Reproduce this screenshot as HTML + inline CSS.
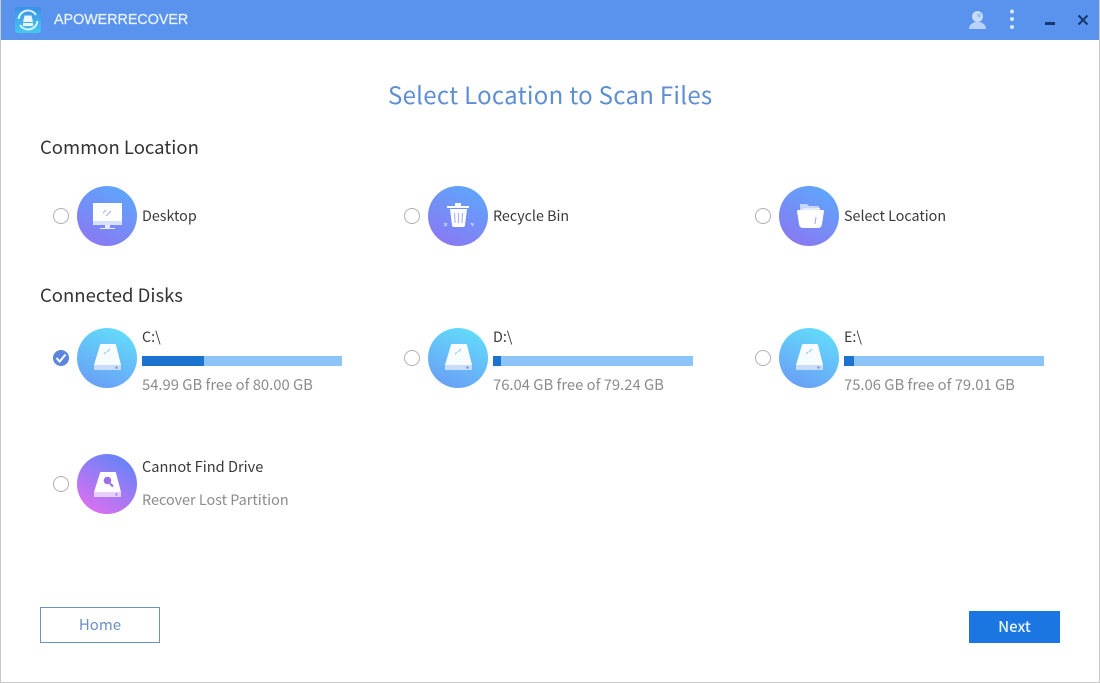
<!DOCTYPE html>
<html><head><meta charset="utf-8"><style>
html,body{margin:0;padding:0;background:#fff}
#p{position:relative;width:1100px;height:683px;overflow:hidden;background:#fff;font-family:"Noto Sans CJK SC","Liberation Sans",sans-serif}
#p:after{content:"";position:absolute;left:0;top:0;right:0;bottom:0;border:1px solid #c9c9c9;border-top:0;pointer-events:none}
.t{position:absolute;white-space:nowrap;line-height:20px}
.n{font-size:14.3px;color:#3a3a3a}
.g{font-size:14.8px;color:#8c8c8c}
.h{font-size:18.5px;color:#333;line-height:24px}
.r{position:absolute;width:14px;height:14px;border:1px solid #b0b0b0;border-radius:50%;background:#fff}
.c{position:absolute;width:60px;height:60px;top:0}
.b{position:absolute;height:10px;width:200px;background:#8cc4f8}
.b i{display:block;height:10px;background:#1b73cf}
svg{position:absolute;display:block}
</style></head><body><div id="p">
<div style="position:absolute;left:0;top:0;width:1100px;height:40px;background:#5a93ee"></div>
<svg style="left:14px;top:6px" width="28" height="28" viewBox="0 0 28 28"><defs><linearGradient id="lg" x1="0" y1="0" x2="0" y2="1"><stop offset="0" stop-color="#3b8fe8"/><stop offset="1" stop-color="#45c8ee"/></linearGradient></defs><rect x="1" y="1" width="26" height="26" rx="3" fill="url(#lg)"/><path d="M4.500 13A9.500 9.500 0 0 1 22 9M23.500 15A9.500 9.500 0 0 1 6 19" fill="none" stroke="#d8f2ff" stroke-width="2"/><path d="M10.500 9.500h7l1.500 6.500h-10zM9 17h10v3H9z" fill="#eaf6ff"/></svg>
<div class="t" style="left:54px;top:10px;font-size:14.3px;color:#eaf3ff;font-family:'Liberation Sans',sans-serif;-webkit-text-stroke:.25px #eaf3ff">APOWERRECOVER</div>
<svg style="left:966px;top:9px" width="22" height="22" viewBox="0 0 22 22"><circle cx="11.500" cy="7.500" r="5.500" fill="#c8dcf8"/><circle cx="13" cy="6.500" r="2" fill="#5a93ee" opacity=".4"/><path d="M3 20c0-4 3-6 6-7h5c3 1 6 3 6 7z" fill="#b9d2f7"/></svg>
<svg style="left:1008px;top:8px" width="8" height="24" viewBox="0 0 8 24"><circle cx="4" cy="3.500" r="2" fill="#d3ecff"/><circle cx="4" cy="11" r="2" fill="#d3ecff"/><circle cx="4" cy="19" r="2" fill="#d3ecff"/></svg>
<div style="position:absolute;left:1045px;top:22px;width:10px;height:3px;background:#16386f"></div>
<svg style="left:1077px;top:14px" width="12" height="12" viewBox="0 0 12 12"><path d="M1.500 1.500l9 9M10.500 1.500l-9 9" stroke="#16386f" stroke-width="2"/></svg>

<div class="t" style="left:388px;top:77px;font-size:24px;letter-spacing:.28px;line-height:34px;color:#5f8fd3">Select Location to Scan Files</div>
<div class="t h" style="left:40px;top:135px">Common Location</div>
<div class="t h" style="left:40px;top:283px">Connected Disks</div>

<svg width="0" height="0" style="left:0;top:0"><defs>
<linearGradient id="pu" x1=".75" y1="0" x2=".25" y2="1"><stop offset="0" stop-color="#5da7fb"/><stop offset="1" stop-color="#8a78f2"/></linearGradient>
<linearGradient id="bl" x1=".7" y1="0" x2=".3" y2="1"><stop offset="0" stop-color="#62dcfb"/><stop offset="1" stop-color="#6a9ff5"/></linearGradient>
<linearGradient id="ma" x1=".8" y1="0" x2=".2" y2="1"><stop offset="0" stop-color="#5f85f7"/><stop offset="1" stop-color="#e06ff0"/></linearGradient>
<g id="disk"><path d="M23 17q0-1 1-1h14q1 0 1 1l5 20H17z" fill="#fff" opacity=".95"/><path d="M27 26l2-2M30 24l3-3" stroke="#9dc0ee" stroke-width="1"/><path d="M17 37h27v5H17z" fill="#c8dcfa"/><rect x="38.500" y="38.500" width="2" height="2" fill="#6c8fd6"/></g>
</defs></svg>

<!-- Row 1 -->
<div class="r" style="left:53px;top:208px"></div>
<svg class="c" style="left:77px;top:186px" viewBox="0 0 60 60"><circle cx="30" cy="30" r="30" fill="url(#pu)"/><rect x="16" y="17" width="29" height="18" fill="#fff"/><path d="M16 35h29v4H16z" fill="#d6e2fb"/><path d="M28 42v-3h5v3z" fill="#e3ebfc"/><path d="M23 42.500h15" stroke="#e3ebfc" stroke-width="1"/><path d="M26 27l3-3M29 30l5-5" stroke="#9db4ee" stroke-width="1"/></svg>
<div class="t n" style="left:142px;top:206px">Desktop</div>

<div class="r" style="left:404px;top:208px"></div>
<svg class="c" style="left:428px;top:186px" viewBox="0 0 60 60"><circle cx="30" cy="30" r="30" fill="url(#pu)"/><path d="M19 21h22" stroke="#fff" stroke-width="2"/><rect x="27" y="17" width="6" height="3" fill="#fff"/><path d="M22 23h17l-2 16q0 2-2 2H26q-2 0-2-2z" fill="#fff"/><path d="M26.500 27l.5 10M30.500 27v10M34.500 27l-.5 10" stroke="#a9b8f2" stroke-width="1.200"/><path d="M16 37l3 3M19 37l-3 3M43 37l2 3M46 38h-3" stroke="#c3d1fa" stroke-width="1.200"/></svg>
<div class="t n" style="left:493px;top:206px">Recycle Bin</div>

<div class="r" style="left:755px;top:208px"></div>
<svg class="c" style="left:779px;top:186px" viewBox="0 0 60 60"><circle cx="30" cy="30" r="30" fill="url(#pu)"/><path d="M21 18h7l2 2h10v5H21z" fill="#c6d5fb"/><path d="M24 22h17v5H24z" fill="#e4ebfe"/><path d="M18 25q0-1 1-1h25q1 0 1 1l-2 13q-.5 4-4 4H24q-3.500 0-4-4z" fill="#fff"/><path d="M37 31l-1 7" stroke="#a9a4f0" stroke-width="1"/></svg>
<div class="t n" style="left:844px;top:206px">Select Location</div>

<!-- Row 2 -->
<svg style="left:53px;top:350px" width="16" height="16" viewBox="0 0 16 16"><circle cx="8" cy="8" r="8" fill="#5a86e0"/><path d="M3.500 8l3.200 3.500L12.500 4.500" fill="none" stroke="#fff" stroke-width="2"/></svg>
<svg class="c" style="left:77px;top:328px" viewBox="0 0 60 60"><circle cx="30" cy="30" r="30" fill="url(#bl)"/><use href="#disk"/></svg>
<div class="t n" style="left:142px;top:327px">C:\</div>
<div class="b" style="left:142px;top:356px"><i style="width:62px"></i></div>
<div class="t g" style="left:142px;top:375px">54.99 GB free of 80.00 GB</div>

<div class="r" style="left:404px;top:350px"></div>
<svg class="c" style="left:428px;top:328px" viewBox="0 0 60 60"><circle cx="30" cy="30" r="30" fill="url(#bl)"/><use href="#disk"/></svg>
<div class="t n" style="left:493px;top:327px">D:\</div>
<div class="b" style="left:493px;top:356px"><i style="width:8px"></i></div>
<div class="t g" style="left:493px;top:375px">76.04 GB free of 79.24 GB</div>

<div class="r" style="left:755px;top:350px"></div>
<svg class="c" style="left:779px;top:328px" viewBox="0 0 60 60"><circle cx="30" cy="30" r="30" fill="url(#bl)"/><use href="#disk"/></svg>
<div class="t n" style="left:844px;top:327px">E:\</div>
<div class="b" style="left:844px;top:356px"><i style="width:10px"></i></div>
<div class="t g" style="left:844px;top:375px">75.06 GB free of 79.01 GB</div>

<!-- Row 3 -->
<div class="r" style="left:53px;top:476px"></div>
<svg class="c" style="left:77px;top:454px" viewBox="0 0 60 60"><circle cx="30" cy="30" r="30" fill="url(#ma)"/><path d="M23 19q0-1 1-1h14q1 0 1 1l5 19H17z" fill="#fff"/><circle cx="30.500" cy="26.500" r="3.800" fill="#9a6fe8"/><path d="M33 29.500l3 3" stroke="#9a6fe8" stroke-width="2"/><path d="M17 38h27v5H17z" fill="#e9cffb"/><rect x="38.500" y="39.500" width="2" height="2" fill="#9a6fe8"/></svg>
<div class="t n" style="left:142px;top:457px;font-size:14.6px">Cannot Find Drive</div>
<div class="t g" style="left:142px;top:490px;font-size:14.4px">Recover Lost Partition</div>

<div style="position:absolute;left:40px;top:607px;width:118px;height:34px;border:1px solid #6f93b8;text-align:center;line-height:33px;font-size:15px;color:#6c8fc4">Home</div>
<div style="position:absolute;left:969px;top:611px;width:91px;height:32px;background:#1b76e2;text-align:center;line-height:31px;font-size:15px;font-weight:500;color:#e6f6ff">Next</div>
</div></body></html>
